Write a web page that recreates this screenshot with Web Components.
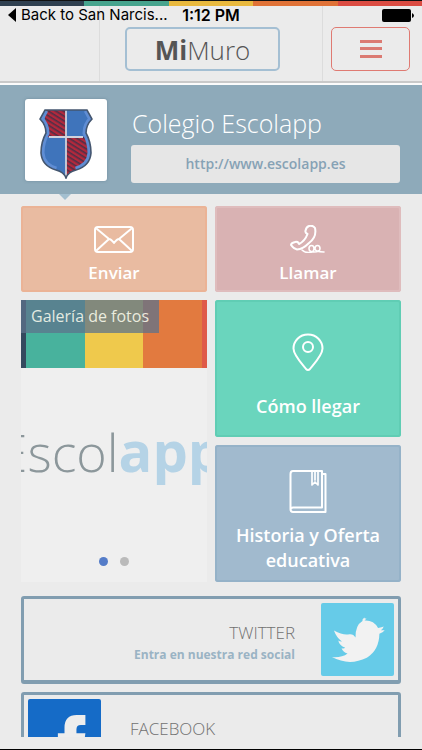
<!DOCTYPE html>
<html lang="es">
<head>
<meta charset="utf-8">
<meta name="viewport" content="width=device-width, initial-scale=1">
<title>MiMuro</title>
<style>
body {
    margin: 0;
    background: #ebebeb;
    font-family: "Open Sans", "Noto Sans", sans-serif;
}
</style>
</head>
<body>
<muro-app></muro-app>

<template id="color-stripes">
<style>
:host {
    display: grid;
    grid-template-columns: var(--stripe-columns, repeat(5, 1fr));
}
</style>
<i style="background: var(--c1, #2f4050)"></i>
<i style="background: var(--c2, #47a48d)"></i>
<i style="background: var(--c3, #e9b93e)"></i>
<i style="background: var(--c4, #e07237)"></i>
<i style="background: var(--c5, #db4c42)"></i>
</template>

<template id="status-bar">
<style>
:host {
    display: grid;
    grid-template-columns: 1fr auto 1fr;
    align-items: center;
    height: 18px;
    padding: 0 8px;
    color: #000;
    font: 16px/18px Inter, "Liberation Sans", sans-serif;
}
.back {
    display: flex;
    align-items: center;
    gap: 5px;
    color: inherit;
    font-size: 15px;
    text-decoration: none;
    white-space: nowrap;
}
.time {
    font-weight: 600;
}
.battery {
    justify-self: end;
}
svg {
    display: block;
}
</style>
<a class="back" href="#back">
    <svg width="8" height="14" viewBox="0 0 8 14"><path d="M8 0v14L0 7z"/></svg>
    <span>Back to San Narcis...</span>
</a>
<span class="time">1:12 PM</span>
<svg class="battery" width="32" height="13" viewBox="0 0 32 13"><rect width="29" height="13" rx="2"/><path d="M30 4q2 1 2 2.500t-2 2.500z"/></svg>
</template>

<template id="app-header">
<style>
:host {
    display: block;
    position: relative;
    border-top: 1px solid #111;
    border-bottom: 2px solid #fbfbfb;
    background: #ebebeb;
}
color-stripes {
    height: 5px;
}
status-bar {
    position: absolute;
    top: 5px;
    left: 0;
    right: 0;
}
.bar {
    display: grid;
    grid-template-columns: 99px 1fr 99px;
    border-bottom: 2px solid #c9c9c9;
}
.cell {
    display: flex;
    box-sizing: border-box;
    height: 75px;
    padding: 21px 12px 10px 8px;
}
.middle {
    padding: 21px 42px 10px 25px;
    border: solid #dcdcdc;
    border-width: 0 1px;
}
h1 {
    flex: 1;
    box-sizing: border-box;
    margin: 0;
    border: 2px solid #a4bfd3;
    border-radius: 5px;
    color: #555;
    font-size: 26px;
    font-weight: 300;
    line-height: 42px;
    text-align: center;
}
b {
    font-weight: 700;
}
button {
    flex: 1;
    padding: 0;
    border: 1px solid #df7a72;
    border-radius: 5px;
    background: none;
    cursor: pointer;
}
svg {
    display: block;
    margin: auto;
}
</style>
<color-stripes></color-stripes>
<div class="bar">
    <div class="cell"></div>
    <div class="cell middle"><h1><b>Mi</b>Muro</h1></div>
    <div class="cell">
        <button type="button" aria-label="Menú">
            <svg width="22" height="18" viewBox="0 0 22 18" fill="#db7a72"><path d="M0 0h22v3H0zM0 7h22v3H0zM0 15h22v3H0z"/></svg>
        </button>
    </div>
</div>
<status-bar></status-bar>
</template>

<template id="school-hero">
<style>
:host {
    display: flex;
    gap: 24px;
    position: relative;
    padding: 14px 22px 11px 25px;
    background: #8eaaba;
}
:host::after {
    content: "";
    position: absolute;
    top: 100%;
    left: 59px;
    border: 6px solid transparent;
    border-top-color: #a3bfd0;
    border-bottom: 0;
}
.thumb {
    display: grid;
    place-items: end center;
    box-sizing: border-box;
    width: 82px;
    height: 82px;
    padding-bottom: 2px;
    border-radius: 3px;
    background: #fff;
    box-shadow: 0 0 3px rgba(80, 110, 130, 0.5);
}
.info {
    display: grid;
    flex: 1;
    gap: 4px;
    padding-top: 6px;
}
h2 {
    margin: 0;
    padding-left: 1px;
    color: #fff;
    font-size: 25px;
    font-weight: 300;
    line-height: 36px;
    white-space: nowrap;
}
a {
    border-radius: 3px;
    background: #e6e6e6;
    color: #86a2b5;
    font-size: 14px;
    font-weight: 600;
    line-height: 38px;
    text-align: center;
    text-decoration: none;
}
</style>
<div class="thumb">
    <svg width="54" height="70" viewBox="0 0 54 70">
        <defs>
            <pattern id="hatch" width="5" height="4" patternUnits="userSpaceOnUse" patternTransform="rotate(32)">
                <rect width="5" height="4" fill="#b3283c"/>
                <rect width="5" height="1.600" fill="#4f3048"/>
            </pattern>
            <clipPath id="crest"><path d="M6 1H48L53 10Q47 16 47 24Q52 33 52 44Q51 57 37 61Q29 63 27 69Q25 63 17 61Q3 57 2 44Q2 33 7 24Q7 16 1 10Z"/></clipPath>
        </defs>
        <g clip-path="url(#crest)">
            <path fill="#3f74bb" d="M0 0h54v70H0z"/>
            <path fill="url(#hatch)" d="M6 0h21v28H6zM27 28h24v42H27z"/>
            <path fill="none" stroke="#5f8dd4" stroke-width="7" d="M6 1 1 10Q7 16 7 24Q2 33 2 44Q3 57 17 61M37 61Q51 57 52 44Q52 33 47 24Q47 16 53 10L48 1"/>
            <path fill="none" stroke="#cfd2dc" stroke-width="1.800" d="M27 1v66M10 28h34"/>
        </g>
        <path fill="none" stroke="#44566f" stroke-width="1.600" d="M6 1H48L53 10Q47 16 47 24Q52 33 52 44Q51 57 37 61Q29 63 27 69Q25 63 17 61Q3 57 2 44Q2 33 7 24Q7 16 1 10Z"/>
    </svg>
</div>
<div class="info">
    <h2><slot></slot></h2>
    <a href="http://www.escolapp.es"><slot name="url"></slot></a>
</div>
</template>

<template id="action-tile">
<style>
:host {
    display: grid;
}
a {
    display: flex;
    flex-direction: column;
    align-items: center;
    gap: var(--tile-gap, 7px);
    box-sizing: border-box;
    padding: var(--tile-top, 19px) 8px 6px;
    border-radius: 3px;
    background: var(--tile-color);
    box-shadow: inset 0 0 0 2px var(--tile-edge);
    color: #fff;
    font-size: var(--tile-font, 18px);
    font-weight: 600;
    line-height: 25px;
    text-align: center;
    text-decoration: none;
}
::slotted(svg) {
    display: block;
    flex: none;
    fill: none;
    stroke: #fff;
    stroke-width: 2px;
    stroke-linejoin: round;
    stroke-linecap: round;
}
</style>
<a href="#"><slot name="icon"></slot><span><slot></slot></span></a>
</template>

<template id="photo-gallery">
<style>
:host {
    display: flex;
    flex-direction: column;
    position: relative;
    min-width: 0;
    overflow: hidden;
    background: #efefef;
}
color-stripes {
    height: 68px;
    --stripe-columns: 5px 1fr 1fr 1fr 5px;
    --c1: #34495e;
    --c2: #48b29d;
    --c3: #efc94c;
    --c4: #e27a3f;
    --c5: #df5a49;
}
h3 {
    position: absolute;
    top: 0;
    left: 0;
    margin: 0;
    padding: 0 10px;
    background: rgba(93, 115, 140, 0.75);
    color: rgba(255, 255, 240, 0.85);
    font-size: 16px;
    font-weight: 400;
    line-height: 33px;
    white-space: nowrap;
}
.logo {
    display: flex;
    flex: 1;
    align-items: baseline;
    justify-content: center;
    padding: 42px 6px 0 0;
    color: #8c979b;
    font-size: 52px;
    font-weight: 300;
    line-height: 80px;
    white-space: nowrap;
}
.logo b {
    color: #b5d3e6;
    font-size: 56px;
    font-weight: 700;
}
.dots {
    display: flex;
    justify-content: center;
    gap: 12px;
    padding: 16px 0;
}
button {
    width: 9px;
    height: 9px;
    padding: 0;
    border: 0;
    border-radius: 50%;
    background: #bababa;
    cursor: pointer;
}
button.on {
    background: #547cc8;
}
</style>
<color-stripes></color-stripes>
<h3><slot></slot></h3>
<div class="logo"><span>Escol</span><b>app</b></div>
<div class="dots">
    <button type="button" class="on" aria-label="Foto 1"></button>
    <button type="button" aria-label="Foto 2"></button>
</div>
</template>

<template id="social-card">
<style>
:host {
    display: block;
}
a {
    display: flex;
    gap: 26px;
    padding: 4px;
    border: 3px solid #819db0;
    border-bottom-width: 4px;
    border-radius: 3px;
    color: #717171;
    text-align: right;
    text-decoration: none;
}
:host([flip]) a {
    flex-direction: row-reverse;
    gap: 29px;
    text-align: left;
}
.text {
    flex: 1;
    padding-top: 18px;
}
.name {
    font-size: 17px;
    font-weight: 300;
    line-height: 24px;
}
.note {
    color: #9ab3c4;
    font-size: 12px;
    font-weight: 700;
    line-height: 20px;
}
::slotted(svg) {
    display: block;
    width: 73px;
    height: 73px;
    border-radius: 2px;
}
</style>
<a href="#">
    <div class="text">
        <div class="name"><slot></slot></div>
        <div class="note"><slot name="note"></slot></div>
    </div>
    <slot name="logo"></slot>
</a>
</template>

<template id="muro-app">
<style>
:host {
    display: flex;
    flex-direction: column;
    box-sizing: border-box;
    height: 100vh;
    padding-bottom: 12px;
    border-bottom: 1px solid #000;
}
app-header,
school-hero {
    flex: none;
}
main {
    flex: 1;
    min-height: 0;
    overflow: hidden;
    padding: 12px 21px 0;
}
.tiles {
    display: grid;
    grid-template-columns: 1fr 1fr;
    grid-template-rows: 86px 137px 137px;
    gap: 8px;
    margin-bottom: 14px;
}
photo-gallery {
    grid-row: 2 / 4;
    grid-column: 1;
}
.send,
.call {
    --tile-font: 17px;
}
.send {
    --tile-color: #e9bba1;
    --tile-edge: #ebb396;
}
.call {
    --tile-color: #d9b2b3;
    --tile-edge: #dfbcbd;
}
.map {
    --tile-color: #6ad5bd;
    --tile-edge: #60cdb4;
    --tile-top: 33px;
    --tile-gap: 23px;
}
.history {
    --tile-color: #a1bace;
    --tile-edge: #95b2c8;
    --tile-top: 25px;
    --tile-gap: 10px;
}
.social {
    display: grid;
    gap: 8px;
}
</style>
<app-header></app-header>
<school-hero>Colegio Escolapp<span slot="url">http://www.escolapp.es</span></school-hero>
<main>
    <div class="tiles">
        <action-tile class="send">
            <svg slot="icon" width="40" height="28" viewBox="0 0 40 28"><rect x="1" y="2" width="38" height="25" rx="3"/><path d="M3 4 15 14Q17 14 20 18Q23 14 25 14L37 4M3 25 15 14M37 25 25 14"/></svg>
            Enviar
        </action-tile>
        <action-tile class="call">
            <svg slot="icon" width="36" height="28" viewBox="0 0 36 28"><path d="M19 1Q23 0 25 3Q27 12 19 18Q13 24 7 24.500Q4 24 1 20Q1 18 5 17Q8 16 9 19Q15 16 17.500 9Q15 8 15.500 6Q16 2 19 1Z"/><path d="M12 25Q15 28 20 27.500Q24 27 24 23.500Q24 20.500 21.500 20.500Q19 20.500 19 23.500Q19 27 24 27Q30 27 30 23.500Q30 20.500 27.500 20.500Q25 20.500 25 23.500Q25 27 34 27" stroke-width="1.600"/></svg>
            Llamar
        </action-tile>
        <photo-gallery>Galería de fotos</photo-gallery>
        <action-tile class="map">
            <svg slot="icon" width="32" height="38" viewBox="0 0 32 38"><path d="M16 1.500C7.500 1.500 1.500 8 1.500 15.500C1.500 22 10 31 14 36Q16 38 18 36C22 31 30.500 22 30.500 15.500C30.500 8 24.500 1.500 16 1.500Z"/><circle cx="16" cy="14" r="5"/></svg>
            Cómo llegar
        </action-tile>
        <action-tile class="history">
            <svg slot="icon" width="38" height="43" viewBox="0 0 38 43"><path d="M33 37.500V1H4Q1.500 1 1.500 4V39Q1.500 42 4 42H36.500V4H33M33 37.500H4Q1.500 37.500 1.500 40"/><path d="M23 2v13l3-3 3 3V2M26 2v8" stroke-width="1.700"/></svg>
            Historia y Oferta educativa
        </action-tile>
    </div>
    <div class="social">
        <social-card>
            <svg slot="logo" viewBox="0 0 220 220"><path fill="#66cbe8" d="M0 0h220v220H0z"/><path fill="#f2f2f2" d="M104 104Q103 67 125 54Q123 49 131 44Q130 48 137 46Q135 50 131 53Q158 51 172 75Q184 74 189 71Q187 78 180 82Q187 83 192 81Q187 90 176 93Q175 143 138 165Q85 191 33 163Q64 165 80 152Q66 148 62 136Q69 138 73 135Q55 128 52 113Q58 117 63 116Q47 105 39 83Q68 99 86 94Q98 93 104 104Z"/></svg>
            TWITTER<span slot="note">Entra en nuestra red social</span>
        </social-card>
        <social-card flip>
            <svg slot="logo" viewBox="0 0 220 220"><path fill="#156bc7" d="M0 0h220v220H0z"/><path fill="#ededed" d="M110 220V132H90V103H110V86Q110 48 147 48H173V78H159Q146 78 146 91V103H173L169 132H146V220Z"/></svg>
            FACEBOOK
        </social-card>
    </div>
</main>
</template>

<script>
// Every element clones the template that carries its own tag name
class MuroElement extends HTMLElement {
  constructor() {
    super();
    const template = document.getElementById(this.localName);
    this.attachShadow({ mode: "open" });
    this.shadowRoot.appendChild(template.content.cloneNode(true));
  }
}

class ColorStripes extends MuroElement {}
class StatusBar extends MuroElement {}
class AppHeader extends MuroElement {}
class SchoolHero extends MuroElement {}
class ActionTile extends MuroElement {}
class SocialCard extends MuroElement {}
class MuroApp extends MuroElement {}

class PhotoGallery extends MuroElement {
  connectedCallback() {
    const dots = this.shadowRoot.querySelectorAll("button");
    dots.forEach((dot) => {
      dot.addEventListener("click", () => {
        dots.forEach((d) => d.classList.toggle("on", d === dot));
      });
    });
  }
}

window.customElements.define("color-stripes", ColorStripes);
window.customElements.define("status-bar", StatusBar);
window.customElements.define("app-header", AppHeader);
window.customElements.define("school-hero", SchoolHero);
window.customElements.define("action-tile", ActionTile);
window.customElements.define("photo-gallery", PhotoGallery);
window.customElements.define("social-card", SocialCard);
window.customElements.define("muro-app", MuroApp);
</script>
</body>
</html>
